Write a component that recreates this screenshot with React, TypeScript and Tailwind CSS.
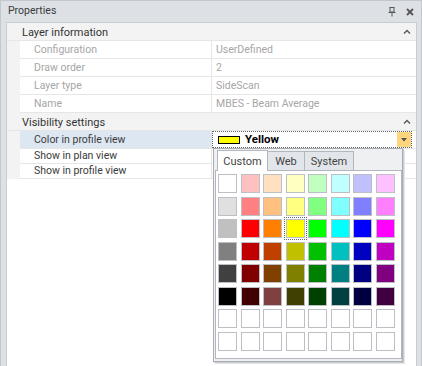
import React from "react";

const customColors = [
  ["#ffffff", "#ffc0c0", "#ffe0c0", "#ffffc0", "#c0ffc0", "#c0ffff", "#c0c0ff", "#ffc0ff"],
  ["#e0e0e0", "#ff8080", "#ffc080", "#ffff80", "#80ff80", "#80ffff", "#8080ff", "#ff80ff"],
  ["#c0c0c0", "#ff0000", "#ff8000", "#ffff00", "#00ff00", "#00ffff", "#0000ff", "#ff00ff"],
  ["#808080", "#c00000", "#c04000", "#c0c000", "#00c000", "#00c0c0", "#0000c0", "#c000c0"],
  ["#404040", "#800000", "#804000", "#808000", "#008000", "#008080", "#000080", "#800080"],
  ["#000000", "#400000", "#804040", "#404000", "#004000", "#004040", "#000040", "#400040"],
  ["#ffffff", "#ffffff", "#ffffff", "#ffffff", "#ffffff", "#ffffff", "#ffffff", "#ffffff"],
  ["#ffffff", "#ffffff", "#ffffff", "#ffffff", "#ffffff", "#ffffff", "#ffffff", "#ffffff"],
];

const layerInfo = [
  { label: "Configuration", value: "UserDefined" },
  { label: "Draw order", value: "2" },
  { label: "Layer type", value: "SideScan" },
  { label: "Name", value: "MBES - Beam Average" },
];

const ChevronUp = () => (
  <svg width="8" height="5" viewBox="0 0 8 5">
    <polyline points="1,4.5 4,1.5 7,4.5" fill="none" stroke="#555" strokeWidth="1.4" />
  </svg>
);

const Category = ({ title }: { title: string }) => (
  <div className="flex items-center h-[18px] bg-[#f3f3f3] border-b border-[#e6e6e6] pl-[15px] pr-[5px]">
    <span className="text-[#333] text-[11px] pt-px">{title}</span>
    <span className="ml-auto flex">
      <ChevronUp />
    </span>
  </div>
);

const Row = ({
  label,
  value,
  readOnly,
  height = "h-[18px]",
  selected,
  children,
}: {
  label: string;
  value?: string;
  readOnly?: boolean;
  height?: string;
  selected?: boolean;
  children?: React.ReactNode;
}) => (
  <div className={`flex ${height}`}>
    <div className="w-[13px] bg-[#f3f3f3]" />
    <div
      className={`w-[192px] flex items-center pl-[14px] pt-px border-b border-r border-[#e6e6e6] ${
        selected ? "bg-[#dde7f2]" : ""
      } ${readOnly ? "text-[#a6a6a6]" : "text-[#3c3c3c]"}`}
    >
      {label}
    </div>
    <div className={`flex-1 flex items-center pl-[4px] border-b border-[#e6e6e6] text-[#a6a6a6] ${children ? "" : "pt-px"}`}>
      {children ?? value}
    </div>
  </div>
);

export default function App() {
  return (
    <div className="relative w-[422px] h-[366px] bg-[#dde1e6] border-l border-r border-t border-[#c3c8ce] flex flex-col overflow-hidden font-['Roboto',sans-serif] text-[10.5px] leading-none">
      {/* Header */}
      <div className="h-[21px] flex items-center pl-[7px] pr-[7px]">
        <span className="text-[#3b3b3b] text-[10.5px]">Properties</span>
        <svg className="ml-auto" width="8" height="10" viewBox="0 0 8 10">
          <rect x="2" y="0.5" width="4" height="4.5" fill="none" stroke="#555" strokeWidth="1" />
          <line x1="0.5" y1="5.5" x2="7.5" y2="5.5" stroke="#555" strokeWidth="1" />
          <line x1="4" y1="5.5" x2="4" y2="9.5" stroke="#555" strokeWidth="1" />
        </svg>
        <svg className="ml-[10px]" width="8" height="8" viewBox="0 0 8 8">
          <path d="M1 1 L7 7 M7 1 L1 7" stroke="#555" strokeWidth="1.8" />
        </svg>
      </div>

      {/* Grid panel */}
      <div className="flex-1 ml-[5px] mr-[4px] border border-b-0 border-[#c9cdd2] bg-white flex flex-col">
        <Category title="Layer information" />
        {layerInfo.map((r) => (
          <Row key={r.label} label={r.label} value={r.value} readOnly />
        ))}
        <Category title="Visibility settings" />
        <Row label="Color in profile view" selected>
          <div className="-ml-[4px] w-full h-[17px] self-start flex items-center border border-dotted border-[#666] bg-white">
            <span className="ml-[5px] w-[22px] h-[8px] bg-[#ffff00] border border-black" />
            <span className="ml-[5px] pt-px font-bold text-[11.5px] text-black">Yellow</span>
            <span className="ml-auto w-[14px] h-full bg-[#fdd57d] flex items-center justify-center">
              <svg width="6" height="4" viewBox="0 0 6 4">
                <polygon points="0,0 6,0 3,3.5" fill="#555" />
              </svg>
            </span>
          </div>
        </Row>
        <Row label="Show in plan view" height="h-[15px]" />
        <Row label="Show in profile view" height="h-[15px]" />
      </div>

      {/* Color popup */}
      <div className="absolute left-[212px] top-[147px] w-[190px] h-[214px] bg-[#eef0f2] border border-[#a9adb3] shadow-[1px_1px_0_#c9ccd0,2px_2px_0_#e3e5e8] pt-[1px] flex flex-col">
        <div className="relative z-10 -mb-px flex items-end h-[21px] pl-[3px] text-[11px] text-[#444]">
          <div className="w-[51px] h-[21px] bg-white border border-b-0 border-[#b3b7bd] flex items-center justify-center">
            Custom
          </div>
          <div className="w-[37px] h-[20px] bg-[#e2e5e9] border border-l-0 border-[#b3b7bd] flex items-center justify-center">
            Web
          </div>
          <div className="w-[49px] h-[20px] bg-[#e2e5e9] border border-l-0 border-[#b3b7bd] flex items-center justify-center">
            System
          </div>
        </div>
        <div className="ml-[1px] w-[187px] h-[189px] bg-white border border-[#b3b7bd] pl-[2px] pt-[3px]">
          <div className="grid grid-cols-[repeat(8,19px)] gap-[3.5px]">
            {customColors.flatMap((row, ri) =>
              row.map((c, ci) => (
                <div
                  key={`${ri}-${ci}`}
                  className={`w-[19px] h-[19px] border border-[#bcc0c5] ${
                    ri === 2 && ci === 3 ? "outline-1 outline-dotted outline-[#666] outline-offset-[1px]" : ""
                  }`}
                  style={{ backgroundColor: c }}
                />
              ))
            )}
          </div>
        </div>
      </div>
    </div>
  );
}
